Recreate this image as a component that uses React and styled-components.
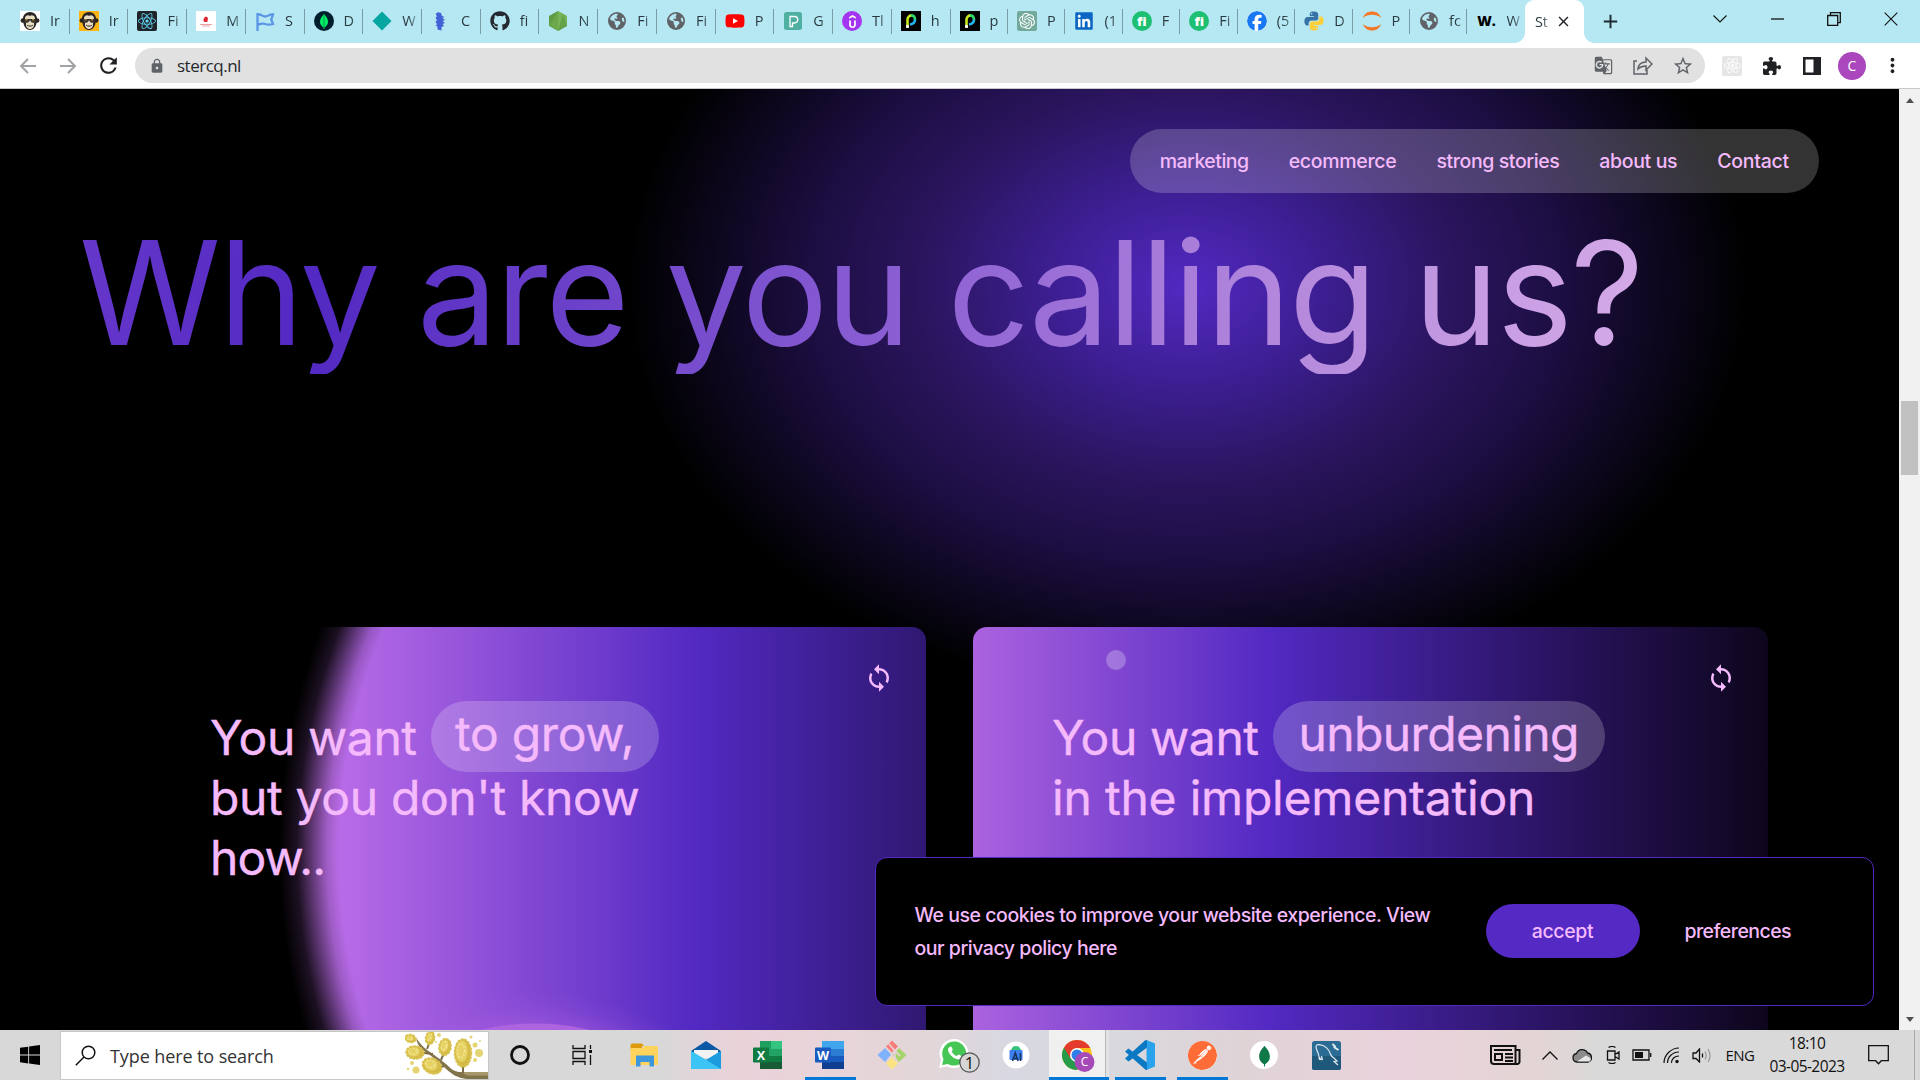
import React from "react";
import styled, { createGlobalStyle, css } from "styled-components";
import { FaGithub, FaYoutube, FaLinkedin, FaFacebook, FaEarthAmericas, FaReact, FaPuzzlePiece } from "react-icons/fa6";
import { SiPostman, SiOpenai, SiUdemy } from "react-icons/si";
import { MdSync, MdLock, MdGTranslate, MdStarBorder, MdMoreVert, MdRefresh, MdAdd, MdClose } from "react-icons/md";

const UI = `"Open Sans", "Noto Sans", sans-serif`;
const BRAND = `Inter, "Liberation Sans", sans-serif`;
const PINK = "#f5bafc";
const VIOLET = "#5229c2";

const Global = createGlobalStyle`
  html, body { margin: 0; padding: 0; overflow: hidden; background: #000; }
  * { box-sizing: border-box; }
  svg { display: block; flex: none; }
`;

const Desktop = styled.div`
  width: 1920px;
  height: 1080px;
  display: flex;
  flex-direction: column;
  overflow: hidden;
  font-family: ${UI};
`;

/* ---------- tab strip ---------- */
const TabStrip = styled.div`
  height: 43px;
  flex: none;
  display: flex;
  background: #b5e8f3;
  padding-left: 11px;
`;
const Tab = styled.div`
  width: ${(p) => p.$w}px;
  flex: none;
  height: 43px;
  display: flex;
  align-items: center;
  padding-left: 9px;
  padding-bottom: 1px;
  background: ${(p) => (p.$last ? "none" : "linear-gradient(#7b9ba5, #7b9ba5) right 0 top 9px / 1px 25px no-repeat")};
`;
const Favicon = styled.span`
  width: ${(p) => p.$s || 20}px;
  height: ${(p) => p.$s || 20}px;
  flex: none;
  display: flex;
  align-items: center;
  justify-content: center;
  overflow: hidden;
  border-radius: ${(p) => p.$r || 0}px;
  background: ${(p) => p.$bg || "transparent"};
  color: ${(p) => p.$fg || "#fff"};
  font: 800 ${(p) => p.$fs || 13}px/20px ${UI};
`;
const TabText = styled.span`
  width: 16px;
  margin-left: 10px;
  overflow: hidden;
  white-space: nowrap;
  font-size: 14.5px;
  line-height: 20px;
  color: #2b3a40;
  mask-image: linear-gradient(90deg, #000 45%, rgba(0, 0, 0, 0.25) 95%);
`;
const ActiveTab = styled.div`
  width: 59px;
  height: 43px;
  flex: none;
  display: flex;
  align-items: center;
  background: #fff;
  border-radius: 9px 9px 0 0;
  padding-left: 10px;
  position: relative;
  &::before, &::after {
    content: "";
    position: absolute;
    bottom: 0;
    width: 10px;
    height: 10px;
  }
  &::before { left: -10px; background: radial-gradient(circle at 0 0, transparent 9.5px, #fff 10px); }
  &::after { right: -10px; background: radial-gradient(circle at 100% 0, transparent 9.5px, #fff 10px); }
`;
const ActiveText = styled(TabText)`
  margin: 0 4px 0 0;
  width: 16px;
`;
const NewTab = styled.div`
  width: 54px;
  display: flex;
  align-items: center;
  justify-content: center;
  color: #1d2b30;
`;
const WindowButtons = styled.div`
  margin-left: auto;
  height: 37px;
  display: flex;
  align-items: center;
`;
const WindowButton = styled.span`
  width: 57.2px;
  display: flex;
  justify-content: center;
`;

/* ---------- toolbar ---------- */
const Toolbar = styled.div`
  height: 46px;
  flex: none;
  display: flex;
  align-items: center;
  padding: 0 8px;
  background: #fff;
  border-bottom: 1px solid #c9c9c9;
`;
const Slot = styled.span`
  width: 40px;
  height: 40px;
  flex: none;
  display: flex;
  align-items: center;
  justify-content: center;
  color: ${(p) => p.$c || "#5f6368"};
`;
const Omnibox = styled.div`
  flex: 1;
  height: 35px;
  margin: 0 7px;
  padding: 0 2px 0 14px;
  border-radius: 18px;
  background: #e1e1e1;
  display: flex;
  align-items: center;
`;
const Url = styled.span`
  flex: 1;
  margin-left: 12px;
  font-size: 17px;
  letter-spacing: -0.5px;
  color: #26292c;
`;
const Avatar = styled.span`
  width: 28px;
  height: 28px;
  border-radius: 50%;
  background: #ab47bc;
  color: #fff;
  display: flex;
  align-items: center;
  justify-content: center;
  font: 400 14px/28px ${UI};
`;
const DevExt = styled.span`
  width: 20px;
  height: 20px;
  border-radius: 2px;
  background: #e6e6e6;
  color: #fff;
  display: flex;
  align-items: center;
  justify-content: center;
`;

/* ---------- page ---------- */
const Viewport = styled.div`
  height: 941px;
  flex: none;
  display: flex;
  position: relative;
  overflow: hidden;
`;
const Page = styled.main`
  width: 1899px;
  height: 941px;
  display: flex;
  flex-direction: column;
  overflow: hidden;
  font-family: ${BRAND};
  color: ${PINK};
  background: radial-gradient(ellipse 560px 412px at 1187px 196px, ${VIOLET} 0%, #3c1e90 25%, #2b155f 47%, #1c0e42 67%, #0b0619 87%, #000 100%) #000;
`;
const SiteNav = styled.nav`
  height: 64px;
  flex: none;
  align-self: flex-end;
  margin: 40px 80px 0 0;
  padding: 0 30px;
  border-radius: 32px;
  background: rgba(255, 255, 255, 0.2);
  display: flex;
  align-items: center;
  gap: 40px;
`;
const NavLink = styled.a`
  font-size: 19.5px;
  font-weight: 500;
  line-height: 24px;
  letter-spacing: ${(p) => p.$ls}px;
  white-space: nowrap;
`;
const Title = styled.h1`
  margin: 18px 0 0 79px;
  width: 1600px;
  height: 163px;
  flex: none;
  font-size: 144px;
  font-weight: 400;
  line-height: 163px;
  letter-spacing: -2.1px;
  white-space: nowrap;
  background: linear-gradient(95deg, #6637cb 0%, #5229c2 15%, #8c60d3 52%, #b68bdd 77%, #d9aee9 100%);
  background-clip: text;
  -webkit-background-clip: text;
  color: transparent;
`;
const CardRow = styled.div`
  display: flex;
  gap: 47px;
  margin: 253px 0 0 131px;
`;
const Card = styled.section`
  width: 795px;
  height: 460px;
  flex: none;
  display: flex;
  justify-content: space-between;
  padding: 80.5px 0 0 79px;
  border-radius: 14px;
  ${(p) =>
    p.$orb
      ? css`
          background:
            radial-gradient(circle 600px at 778px 225px, transparent 95%, rgba(0, 0, 0, 0.15) 97%, rgba(0, 0, 0, 0.5) 99.5%, rgba(0, 0, 0, 0.85) 102%, #000 105%),
            radial-gradient(circle 290px at 404px 632px, #b368e1 0, #ae64df 81%, rgba(174, 96, 224, 0.38) 81.4%, rgba(174, 96, 224, 0.12) 87%, rgba(174, 96, 224, 0) 93%),
            linear-gradient(90deg, #c674ec 160px, ${VIOLET} 565px, #2f1871 795px);
        `
      : css`
          background: linear-gradient(90deg, #ab62df 0%, ${VIOLET} 37.5%, #2b1464 72%, #0d061b 100%);
        `}
`;
const CardText = styled.div`
  font-size: 48px;
  line-height: 60px;
  white-space: nowrap;
  -webkit-text-stroke: 0.4px ${PINK};
`;
const Line = styled.div`
  display: flex;
  height: 60px;
  letter-spacing: ${(p) => p.$ls}px;
`;
const Chip = styled.span`
  height: 71px;
  width: ${(p) => p.$w}px;
  margin: -6.5px 0 0 ${(p) => p.$gap}px;
  padding-top: 3px;
  border-radius: 36px;
  text-align: center;
  background: rgba(255, 255, 255, 0.2);
  letter-spacing: ${(p) => p.$ls}px;
`;
const SyncBadge = styled.span`
  width: 30px;
  height: 30px;
  margin: -45px 32.5px 0 0;
`;
const PointerDot = styled.span`
  position: absolute;
  left: 1106px;
  top: 561px;
  width: 20px;
  height: 20px;
  border-radius: 50%;
  background: rgba(255, 255, 255, 0.25);
`;
const CookieBar = styled.aside`
  position: absolute;
  left: 874.5px;
  top: 768px;
  width: 999px;
  height: 149px;
  border: 1px solid ${VIOLET};
  border-radius: 12px;
  background: #000;
  display: flex;
  align-items: center;
  padding: 0 0 2px 39px;
  font-family: ${BRAND};
  color: ${PINK};
  font-size: 19.5px;
  font-weight: 500;
  white-space: nowrap;
`;
const CookieText = styled.p`
  margin: 2px 0 0;
  width: 571px;
  line-height: 33px;
  letter-spacing: -0.47px;
`;
const Accept = styled.button`
  width: 154px;
  height: 54px;
  border: 0;
  border-radius: 27px;
  background: #5429c4;
  color: inherit;
  font: inherit;
  letter-spacing: -0.4px;
  padding: 0;
`;
const Preferences = styled.span`
  margin-left: 45px;
  letter-spacing: -0.55px;
`;
const ScrollTrack = styled.div`
  width: 21px;
  height: 941px;
  background: #f1f1f1;
  display: flex;
  flex-direction: column;
  align-items: center;
  padding: 9px 0 8px;
`;
const ScrollThumb = styled.div`
  width: 17px;
  height: 74px;
  margin-top: 298px;
  margin-bottom: auto;
  background: #c1c1c1;
`;
const Arrow = styled.span`
  border: 4.5px solid transparent;
  border-top-width: ${(p) => (p.$down ? 5 : 0)}px;
  border-bottom-width: ${(p) => (p.$down ? 0 : 5)}px;
  border-${(p) => (p.$down ? "top" : "bottom")}-color: #505050;
`;

/* ---------- taskbar ---------- */
const Taskbar = styled.footer`
  height: 50px;
  flex: none;
  display: flex;
  background: linear-gradient(90deg, #d8d8d8 0, #d8d8d8 660px, #ead2d9 740px, #e9d4da 800px, #e2d6d8 930px, #d8d8e2 1010px, #d9d8dd 1130px, #dfd3d6 1240px, #ead2dc 1400px, #e3d5d4 1540px, #d9d9d9 1600px);
`;
const Start = styled.div`
  width: 60px;
  flex: none;
  display: flex;
  align-items: center;
  justify-content: center;
`;
const Search = styled.div`
  width: 429px;
  flex: none;
  height: 49px;
  margin-top: 1px;
  border: 1px solid #c6c6c6;
  background: #fff;
  display: flex;
  align-items: center;
  padding-left: 14px;
  color: #333;
  font-size: 18px;
  letter-spacing: -0.1px;
`;
const SearchText = styled.span`
  flex: 1;
  margin-left: 14px;
`;
const AppSlot = styled.div`
  width: 62px;
  flex: none;
  display: flex;
  flex-direction: column;
  align-items: center;
  justify-content: center;
  background: ${(p) =>
    p.$open
      ? "linear-gradient(#0078d7, #0078d7) center bottom / 51px 3px no-repeat"
      : p.$active
      ? "linear-gradient(#0078d7, #0078d7) 2px bottom / 60px 3px no-repeat, linear-gradient(90deg, #f0f0f1 56px, #b9babd 56px, #b9babd 57px, #e2e2e5 57px) 2px 0 / 60px 50px no-repeat"
      : "none"};
`;
const Tray = styled.div`
  margin-left: auto;
  display: flex;
  align-items: center;
  color: #111;
  font-size: 15px;
`;
const TrayItem = styled.span`
  width: ${(p) => p.$w}px;
  margin-right: ${(p) => p.$mr || 0}px;
  display: flex;
  justify-content: center;
  letter-spacing: -0.5px;
`;
const Clock = styled.div`
  width: 87px;
  margin-right: 2.5px;
  text-align: center;
  font-size: 15.5px;
  line-height: 23px;
  letter-spacing: -0.6px;
  padding-bottom: 1px;
  white-space: nowrap;
`;
const ShowDesktop = styled.span`
  width: 6px;
  height: 50px;
  border-left: 1px solid #a8a8a8;
`;

/* ---------- drawings ---------- */
const Monkey = () => (
  <svg width="20" height="20" viewBox="0 0 20 20">
    <circle cx="2.8" cy="9.500" r="2.2" fill="#2a2523" /><circle cx="17.2" cy="9.500" r="2.2" fill="#2a2523" />
    <path d="M10 1c5 0 7.500 3.600 7 8.500C16.500 15 14 19 10 19S3.500 15 3 9.500C2.500 4.600 5 1 10 1z" fill="#2a2523" />
    <path d="M10 5c1.500-1.500 5-.5 5 2.500l-1 5c.5 3-1.500 5.500-4 5.500s-4.500-2.500-4-5.500l-1-5c0-3 3.500-4 5-2.500z" fill="#e9dcc4" />
    <path d="M4 8h12l-.4 2.700c-.3 1.300-3.800 1.300-4.600 0L10 9.300l-1 1.400c-.8 1.300-4.300 1.300-4.600 0z" fill="#3a352e" />
    <path d="M5.500 8.800h2M12 8.800h2" stroke="#d9a92c" strokeWidth="1" />
    <path d="M7.200 14.200c1.600 1.200 4 1.200 5.600 0" stroke="#2a2523" fill="none" />
  </svg>
);
const Pillar = () => (
  <svg width="20" height="20" viewBox="0 0 20 20">
    <path d="M9.500 5.500c1.500 0 1.500 1.500 2.500 1l-.5 4c-1.500 1-3.500.5-4-.5 0-2 .5-3 2-4.500z" fill="#e32630" />
    <path d="M4 13.500h12M6 15h8" stroke="#e9a3a7" />
  </svg>
);
const Flag = () => (
  <svg width="20" height="20" viewBox="0 0 20 20" fill="none" stroke="#5b96e6" strokeWidth="2.300">
    <path d="M2.500 20V2M2.500 4c3-2 4.500 1.500 7.500 1.500S14.500 3 18 3.500l-1.800 5 1.800 4.500c-4 1-5 1-8 0s-4-.5-7.500 1" />
  </svg>
);
const Leaf = ({ s = 20, fill = "#00ed64" }) => (
  <svg width={s} height={s} viewBox="0 0 20 20">
    <path d="M10 3c3 3 4 5.500 4 8s-1.800 4.500-3.600 5.500v1.500h-.8v-1.500C7.800 15.500 6 13.500 6 11s1-5 4-8z" fill={fill} />
    <path d="M10 3v15" stroke="#0a7a45" strokeWidth=".7" />
  </svg>
);
const Diamond = () => <svg width="20" height="20"><path d="M10 .5L19.500 10 10 19.500.5 10z" fill="#05a5a0" /></svg>;
const Feather = () => (
  <svg width="20" height="20"><path d="M6 1l4 1 1 3 2.500 1-2 1 2.500 2-2.500 1 2.500 2-2.500 1 1.500 2-2.500 1v3.500l-4-1v-3l-2-1 1.500-1-1.500-3 1.500-1-1.500-3 1.500-1-1.500-3 2-.5z" fill="#3f63d6" /></svg>
);
const GlobeIcon = () => <FaEarthAmericas size={18} color="#5f6368" />;
const PLetter = () => (
  <svg width="20" height="20"><rect x="1" y="1" width="18" height="18" rx="2.500" fill="#4fb0a2" /><path d="M7 15.500V5.500h4.500a2.800 2.800 0 010 6.500H9.500v3.500z" fill="none" stroke="#fff" strokeWidth="1.300" /></svg>
);
const RainbowP = () => (
  <svg width="20" height="20" fill="none" strokeWidth="2.600">
    <path d="M6.500 16.500V9a4.500 4.500 0 014-4.600" stroke="#c9ea1d" />
    <path d="M6.500 17v-3" stroke="#fff" />
    <path d="M10 4.400c2.800 0 4 1.800 4 4.600" stroke="#2fd66b" />
    <path d="M14 8.500c0 3-1.800 4.500-5 5" stroke="#23b4ee" />
  </svg>
);
const Jupyter = () => (
  <svg width="20" height="20" fill="#f37726"><path d="M.8 7C2.500 2.500 6 .5 10 .5S17.500 2.500 19.200 7C16.500 4.600 13.500 3.800 10 3.800S3.500 4.600.8 7zM.8 13c2.700 2.400 5.700 3.200 9.200 3.200s6.500-.8 9.200-3.200c-1.700 4.500-5.200 6.500-9.200 6.500S2.500 17.500.8 13z" /></svg>
);
const Python = () => (
  <svg width="20" height="20" viewBox="0 0 20 20">
    <path d="M9.900.5C6 .5 5.800 2.200 5.800 3.200v2h4.300v.8H3.600C1.500 6 .4 7.700.4 10.200S1.500 14.400 3 14.400h1.700v-2.200c0-1.600 1.200-2.700 2.800-2.700h4.400c1.300 0 2.300-1 2.300-2.300v-4C14.200 1.700 12.800.5 9.900.5zM7.600 1.900a.8.800 0 110 1.600.8.800 0 010-1.600z" fill="#3873a5" />
    <path d="M10.100 19.500c3.900 0 4.100-1.700 4.100-2.700v-2H9.900V14h6.500c2.100 0 3.200-1.700 3.200-4.200s-1.100-4.200-2.600-4.200h-1.700v2.200c0 1.600-1.200 2.700-2.800 2.700H8.100c-1.300 0-2.300 1-2.300 2.300v4c0 1.500 1.400 2.700 4.300 2.700zm2.300-1.400a.8.800 0 110-1.600.8.800 0 010 1.600z" fill="#fdd03b" />
  </svg>
);
const NodeHex = () => (
  <svg width="20" height="20"><path d="M10 0l9 5v10l-9 5-9-5V5z" fill="#6aa84a" /><path d="M10 0l9 5v10l-9 5z" fill="#83c060" opacity=".5" /><path d="M1 15L10 0 1 5zM10 20l9-5-4-12z" fill="#4d8a3a" opacity=".45" /></svg>
);
const Svg = ({ w = 20, h = 20, children, ...r }) => (
  <svg width={w} height={h} viewBox={`0 0 ${w} ${h}`} fill="none" stroke="#111" strokeWidth="1.300" {...r}>{children}</svg>
);

const blooms = [
  [5.5, 6.5, 5.5, 4, 10],
  [25, 6, 4.500, 6.500, 10],
  [10, 20.500, 9, 6.500, 5],
  [40, 15, 6, 8.500, 10],
  [58, 21, 8.500, 14, 0],
  [27, 34, 10, 7.500, 25],
];
const Branch = () => (
  <svg width="83" height="47" viewBox="0 0 83 47">
    <path d="M11 6c4 5 6 8 11 12 7 5 12 8 19 14 6 6 9 8 15 8h27v7H62C52 46 46 42 38 34 31 27 25 23 19 19 14 15 12 11 11 6z" fill="#82744a" />
    <path d="M56 40h27v3.500H62z" fill="#a8996a" />
    <path d="M36 28l3-7M28 22l-9-1M39 34l-6 2M58 41v-7M22 17l2-5" stroke="#7b6c45" strokeWidth="2" />
    {blooms.map(([x, y, a, b, r], i) => (
      <g key={i} transform={`rotate(${r} ${x} ${y})`}>
        <ellipse cx={x} cy={y} rx={a} ry={b} fill="#d3b945" />
        <ellipse cx={x - a / 6} cy={y - b / 8} rx={a * 0.72} ry={b * 0.78} fill="#e6d264" />
        <ellipse cx={x - a / 4} cy={y - b / 6} rx={a * 0.45} ry={b * 0.5} fill="none" stroke="#f2e78f" strokeWidth="1.800" strokeDasharray="1.800 1.500" />
        <ellipse cx={x} cy={y} rx={a - 0.5} ry={b - 0.5} fill="none" stroke="#d9c250" strokeWidth="2.500" strokeDasharray="2.500 1" />
      </g>
    ))}
    {[[34, 3, 2], [66, 5, 1.5], [70, 13, 2.5], [74, 21, 4], [70, 28, 2], [7, 31, 2], [11, 38, 3.5], [3, 37, 1.2], [31, 10, 1], [75, 9, 1]].map(([x, y, r], i) => (
      <circle key={i} cx={x} cy={y} r={r} fill="#dfcd5a" opacity=".85" />
    ))}
  </svg>
);

const Explorer = () => (
  <svg width="28" height="24" viewBox="0 0 28 24">
    <path d="M.5 2.500a2 2 0 012-2H12L14 3h-2v4H.5z" fill="#dd9a0a" /><path d="M.5 5h12l2-2H27a1 1 0 011 1v18H.5z" fill="#ffd35c" />
    <path d="M6 23.500V12.500h18v11h-4.500V19h-9v4.500z" fill="#3c97dd" />
  </svg>
);
const Mail = () => (
  <svg width="30" height="30" viewBox="0 0 30 30">
    <path d="M0 11L15 1l15 10v4H0z" fill="#0a58a5" /><path d="M3 10h24v8H3z" fill="#f3f3f3" />
    <path d="M0 11l15 9 15-9v18H0z" fill="#2fb4ee" /><path d="M15 20l15 9V11z" fill="#1d9bdf" /><path d="M0 11l30 18H0z" fill="#3cc4f6" />
  </svg>
);
const Office = ({ letter, c }) => (
  <svg width="30" height="30" viewBox="0 0 30 30">
    <path d="M7 1h22v28H7z" fill={c[0]} /><path d="M18 1h11v8H18z" fill={c[1]} /><path d="M7 9h22v7H7z" fill={c[2]} /><path d="M7 16h22v7H7z" fill={c[3]} /><path d="M7 22h22v7H7z" fill={c[4]} />
    <rect x="0" y="7.500" width="16" height="15" rx="1" fill={c[5]} />
    <text x="8" y="19.500" textAnchor="middle" fill="#fff" fontFamily="Open Sans" fontWeight="700" fontSize="12.500">{letter}</text>
  </svg>
);
const GitDiamond = () => (
  <svg width="30" height="30" viewBox="0 0 30 30">
    <path d="M15 .5l6 6-6 6-6-6z" fill="#f97c78" /><path d="M8 8l6 6.500L8 22 .5 15z" fill="#7fb2fb" />
    <path d="M22 8l7.500 7L22 22l-6-7z" fill="#a6d46a" /><path d="M15 17l6 6.500-6 6-6-6z" fill="#fbe282" />
    <path d="M12 4l6 7v9M18 11l5 5" stroke="#e8d3d9" strokeWidth="1.600" fill="none" /><circle cx="18" cy="11" r="1.600" fill="#e8d3d9" /><circle cx="18" cy="19" r="1.600" fill="#e8d3d9" />
  </svg>
);
const WhatsApp = () => (
  <Svg w={54} h={36} stroke="none">
    <path d="M12 31l2-8A14.500 14.500 0 1127 31c-2.500 0-4.500-.5-6.500-1.500z" fill="#fff" />
    <path d="M15 28l1.500-6A12 12 0 1127 28.500c-2.200 0-4.200-.6-6-1.600z" fill="#45c655" />
    <path d="M22.500 10c1-1 2-.6 2.400.6l.8 2c.2.800-1.200 1.600-.9 2.200 1 2 2.600 3.300 4.600 4.200.8.200 1.500-1.700 2.300-1.400l2.400 1.200c1.200.7-.3 3.500-2.600 3.600-4.500.3-10.800-6-10.500-9.800.1-1 .7-1.900 1.500-2.600z" fill="#fff" />
    <circle cx="42.500" cy="25.500" r="9.700" fill="#d6d6d6" stroke="#555" />
    <text x="42.500" y="31.500" textAnchor="middle" fontFamily="Open Sans" fontSize="16.500" fill="#111">1</text>
  </Svg>
);
const Studio = () => (
  <svg width="28" height="28" viewBox="0 0 28 28">
    <circle cx="14" cy="14" r="13.500" fill="#fff" /><path d="M9 10a5 5 0 0110 0z" fill="#35c47b" /><rect x="7.500" y="9" width="13" height="10" rx="1" fill="#3d7ff0" />
    <path d="M10.500 20l2.800-8 2.800 8M11.500 17.500h4M18.500 12v8" stroke="#17355f" strokeWidth="1.600" fill="none" />
  </svg>
);
const Chrome = () => (
  <Svg w={36} h={34} stroke="none">
    <g transform="translate(2 2)">
      <circle cx="15" cy="15" r="15" fill="#fbc116" />
      <path d="M15 15L2 7.500A15 15 0 0015 30l6-11z" fill="#269b4a" /><path d="M15 8h13.200A15 15 0 0015 0 15 15 0 002 7.500l6.500 11z" fill="#e33b2e" />
      <circle cx="15" cy="15" r="7" fill="#fff" /><circle cx="15" cy="15" r="5.500" fill="#2f7de9" />
      <circle cx="22.500" cy="22" r="10" fill="#a64ab8" />
      <text x="22.500" y="26.200" textAnchor="middle" fontFamily="Open Sans" fontSize="12" fill="#fff">C</text>
    </g>
  </Svg>
);
const Code = () => (
  <svg width="30" height="30" viewBox="0 0 30 30">
    <path d="M21.500 0L30 3.500v23L21.500 30z" fill="#2aa3ec" />
    <path d="M22 7.500L3.500 21.500 0 18.600 20.500 0l1.500.5zM0 11.500l3.500-3L22 22.500V30l-1.500-.3z" fill="#0b78c4" />
  </svg>
);
const MySql = () => (
  <svg width="29" height="29" viewBox="0 0 29 29" fill="none" stroke="#dfeaf2">
    <rect width="29" height="29" rx="2.500" fill="#2a6c93" stroke="none" /><path d="M0 15h29v11.500a2.500 2.500 0 01-2.500 2.500h-24A2.500 2.500 0 010 26.500z" fill="#1e587a" stroke="none" />
    <path d="M9.500 19l-2.500-3c0-4-3-7-3-10S6 3.500 9 4c6 1 8 5 9.500 9 .5 2 1.500 3 3.500 4l3 3-3 .5 4 3.500M7 16l.5 3M9.500 15l1 4" strokeWidth="1.200" />
    <path d="M20.500 3l2.500 2.500-.5 1L26.500 9" strokeWidth="2" />
  </svg>
);

const mk = (bg) => <Favicon $bg={bg}><Monkey /></Favicon>;
const tabs = [
  ["Ir", mk("#fff")],
  ["Ir", mk("#fdb515")],
  ["Fi", <Favicon $bg="#20232a" $r={2} $fg="#61dafb"><FaReact size={18} /></Favicon>],
  ["M", <Favicon $bg="#fff"><Pillar /></Favicon>],
  ["S", <Favicon><Flag /></Favicon>],
  ["D", <Favicon $bg="#001e2b" $r={10}><Leaf /></Favicon>],
  ["W", <Favicon><Diamond /></Favicon>],
  ["C", <Favicon><Feather /></Favicon>],
  ["fi", <Favicon $fg="#24292f"><FaGithub size={20} /></Favicon>],
  ["N", <Favicon><NodeHex /></Favicon>],
  ["Fi", <Favicon><GlobeIcon /></Favicon>],
  ["Fi", <Favicon><GlobeIcon /></Favicon>],
  ["P", <Favicon $fg="#f00" $bg="radial-gradient(#fff 30%, transparent 31%)"><FaYoutube size={20} /></Favicon>],
  ["G", <Favicon><PLetter /></Favicon>],
  ["Tl", <Favicon $bg="#a435f0" $r={10}><SiUdemy size={13} /></Favicon>],
  ["h", <Favicon $bg="#000"><RainbowP /></Favicon>],
  ["p", <Favicon $bg="#000"><RainbowP /></Favicon>],
  ["P", <Favicon $bg="#74aa9c" $r={2}><SiOpenai size={16} /></Favicon>],
  ["(1", <Favicon $fg="#0a66c2" $bg="linear-gradient(#fff, #fff) center / 13px 14px no-repeat"><FaLinkedin size={20} /></Favicon>],
  ["F", <Favicon $bg="#1dbf73" $r={10}>fi</Favicon>],
  ["Fi", <Favicon $bg="#1dbf73" $r={10}>fi</Favicon>],
  ["(5", <Favicon $fg="#1877f2" $r={10} $bg="#fff"><FaFacebook size={20} /></Favicon>],
  ["D", <Favicon><Python /></Favicon>],
  ["P", <Favicon><Jupyter /></Favicon>],
  ["fc", <Favicon><GlobeIcon /></Favicon>],
  ["W", <Favicon $fg="#000" $fs={14}>W.</Favicon>],
];

const excel = ["#1f9f5f", "#33c481", "#21a366", "#107c41", "#185c37", "#107c41"];
const word = ["#41a5ee", "#41a5ee", "#2b7cd3", "#185abd", "#103f91", "#185abd"];
const apps = [
  [<Svg w={22} h={22} strokeWidth="2.800"><circle cx="11" cy="11" r="8.500" /></Svg>],
  [<Svg w={22} h={20}><path d="M2 0v3.500h12V0M2 20v-3.500h12V20M2 6.500h12v7H2zM19.500 0v4M19.500 10v10" /><path d="M18 5h3v3h-3z" fill="#111" stroke="none" /></Svg>],
  [<Explorer />],
  [<Mail />],
  [<Office letter="X" c={excel} />],
  [<Office letter="W" c={word} />, "open"],
  [<GitDiamond />],
  [<WhatsApp />],
  [<Studio />],
  [<Chrome />, "active"],
  [<Code />, "open"],
  [<Favicon $s={29} $bg="#fff" $r={15} $fg="#ff6c37"><SiPostman size={30} /></Favicon>, "open"],
  [<Favicon $s={28} $bg="#fff" $r={14}><Leaf s={27} fill="#10774a" /></Favicon>],
  [<MySql />],
];

export default function App() {
  return (
    <Desktop>
      <Global />
      <TabStrip>
        {tabs.map(([t, icon], i) => (
          <Tab key={i} $w={i < 16 ? 58.72 : 57.45} $last={i === tabs.length - 1}>
            {icon}
            <TabText>{t}</TabText>
          </Tab>
        ))}
        <ActiveTab>
          <ActiveText>St</ActiveText>
          <MdClose size={17} color="#202124" />
        </ActiveTab>
        <NewTab><MdAdd size={23} /></NewTab>
        <WindowButtons>
          <WindowButton><Svg w={14} h={8} strokeWidth="1.100"><path d="M.5.5L7 7 13.500.5" /></Svg></WindowButton>
          <WindowButton><Svg w={13} h={2}><path d="M0 1h13" /></Svg></WindowButton>
          <WindowButton><Svg w={14} h={14}><path d="M.7 3.500h10v10h-10zM3.500 3V.7h9.800v10H11" /></Svg></WindowButton>
          <WindowButton><Svg w={14} h={14} strokeWidth="1.100"><path d="M.7.7l12.600 12.600M13.300.7L.7 13.300" /></Svg></WindowButton>
        </WindowButtons>
      </TabStrip>
      <Toolbar>
        <Slot><Svg w={18} h={16} stroke="#a0a3a6" strokeWidth="2"><path d="M17 8H2M9 1L2 8l7 7" /></Svg></Slot>
        <Slot><Svg w={18} h={16} stroke="#a0a3a6" strokeWidth="2"><path d="M1 8h15M9 1l7 7-7 7" /></Svg></Slot>
        <Slot $c="#202124"><MdRefresh size={25} /></Slot>
        <Omnibox>
          <MdLock size={16} color="#5f6368" />
          <Url>stercq.nl</Url>
          <Slot><MdGTranslate size={19} /></Slot>
          <Slot><Svg w={20} h={19} stroke="#5f6368" strokeWidth="1.500"><path d="M4 5H1v13h13v-4M5 13c.5-5 3.500-7 8-7V2l6 6-6 6v-4c-4 0-6 1-8 3z" /></Svg></Slot>
          <Slot><MdStarBorder size={22} /></Slot>
        </Omnibox>
        <Slot><DevExt><FaReact size={17} /></DevExt></Slot>
        <Slot $c="#202124"><FaPuzzlePiece size={18} /></Slot>
        <Slot><Svg w={18} h={18}><path d="M0 0h18v18H0z" fill="#202124" stroke="none" /><path d="M2.500 2.500h8v13h-8z" fill="#fff" stroke="none" /></Svg></Slot>
        <Slot><Avatar>C</Avatar></Slot>
        <Slot $c="#202124"><MdMoreVert size={23} /></Slot>
      </Toolbar>

      <Viewport>
        <Page>
          <SiteNav>
            <NavLink $ls={-0.5}>marketing</NavLink>
            <NavLink $ls={-0.3}>ecommerce</NavLink>
            <NavLink $ls={-0.4}>strong stories</NavLink>
            <NavLink $ls={-0.35}>about us</NavLink>
            <NavLink $ls={-0.25}>Contact</NavLink>
          </SiteNav>
          <Title>Why are you calling us?</Title>
          <CardRow>
            <Card $orb>
              <CardText>
                <Line $ls={-0.4}>You want<Chip $w={228} $gap={14} $ls={-0.3}>to grow,</Chip></Line>
                <Line $ls={-0.35}>but you don't know</Line>
                <Line $ls={-0.9}>how..</Line>
              </CardText>
              <SyncBadge><MdSync size={30} /></SyncBadge>
            </Card>
            <Card>
              <CardText>
                <Line $ls={-0.4}>You want<Chip $w={332} $gap={14} $ls={-0.6}>unburdening</Chip></Line>
                <Line $ls={-0.2}>in the implementation</Line>
              </CardText>
              <SyncBadge><MdSync size={30} /></SyncBadge>
            </Card>
          </CardRow>
        </Page>
        <ScrollTrack>
          <Arrow />
          <ScrollThumb />
          <Arrow $down />
        </ScrollTrack>
        <PointerDot />
        <CookieBar>
          <CookieText>
            We use cookies to improve your website experience. View<br />our privacy policy here
          </CookieText>
          <Accept>accept</Accept>
          <Preferences>preferences</Preferences>
        </CookieBar>
      </Viewport>

      <Taskbar>
        <Start>
          <svg width="20" height="20" viewBox="0 0 20 20"><path d="M0 2.800L8.200 1.700v7.900H0zM9.100 1.500L20 0v9.600H9.100zM0 10.500h8.200v7.900L0 17.300zM9.100 10.500H20V20L9.100 18.500z" fill="#000" /></svg>
        </Start>
        <Search>
          <Svg w={21} h={21} strokeWidth="1.500"><circle cx="13.500" cy="7.500" r="6.300" /><path d="M9 12L.8 20.200" /></Svg>
          <SearchText>Type here to search</SearchText>
          <Branch />
        </Search>
        {apps.map(([icon, state], i) => (
          <AppSlot key={i} $open={state === "open"} $active={state === "active"}>{icon}</AppSlot>
        ))}
        <Tray>
          <TrayItem $w={52}>
            <Svg w={31} h={20} strokeWidth="2"><path d="M1 1h24.500v18H4a3 3 0 01-3-3zM25.500 5H29.500v11a2.500 2.500 0 01-2.500 3h-3M4 5h18M15 9h8M15 12.500h8M15 16h8" /><path d="M5 9h7v6H5z" /></Svg>
          </TrayItem>
          <TrayItem $w={36}><Svg w={16} h={9}><path d="M.5 8.500L8 1l7.500 7.500" /></Svg></TrayItem>
          <TrayItem $w={30}><Svg w={21} h={15}><path d="M5 14a4.300 4.300 0 01-.5-8.500A6 6 0 0115.500 5a4.600 4.600 0 01.5 9z" fill="#8b8b8b" /><path d="M5 13.500l9-6 5 3-1 3z" fill="#e6e6e6" stroke="none" /></Svg></TrayItem>
          <TrayItem $w={30}><Svg w={14} h={18}><path d="M1.500 5h7.500v9H1.500zM9 8.500l4-2.500v7l-4-2.500M2.500 1.500c2-1.300 5-1.300 7 0M2.500 16.500c2 1.300 5 1.300 7 0" /></Svg></TrayItem>
          <TrayItem $w={29}><Svg w={20} h={12}><path d="M1 1h16v10H1zM18.700 4v4" /><path d="M3 3h8v6H3z" fill="#111" stroke="none" /></Svg></TrayItem>
          <TrayItem $w={30}><Svg w={17} h={17} strokeWidth="1.200"><path d="M1 16C1 8 8 1 16 1M4.500 16c0-6 5-11 11.500-11M8.500 16c0-4 3-7 7.500-7" /><circle cx="14" cy="14.500" r="1.700" fill="#111" stroke="none" /></Svg></TrayItem>
          <TrayItem $w={30}><Svg w={20} h={15}><path d="M1 5h3l3.500-4v13L4 10.500H1z" /><path d="M10.500 5.500v4" /><path d="M13 3.500c1.500 2.500 1.500 5.500 0 8M16 1c2.500 4 2.500 9 0 13" stroke="#999" /></Svg></TrayItem>
          <TrayItem $w={47}>ENG</TrayItem>
          <Clock>18:10<br />03-05-2023</Clock>
          <TrayItem $w={50} $mr={11}><Svg w={21} h={20}><path d="M.7.700h19.600v15h-7l-2.800 3-2.800-3h-7z" /></Svg></TrayItem>
          <ShowDesktop />
        </Tray>
      </Taskbar>
    </Desktop>
  );
}
